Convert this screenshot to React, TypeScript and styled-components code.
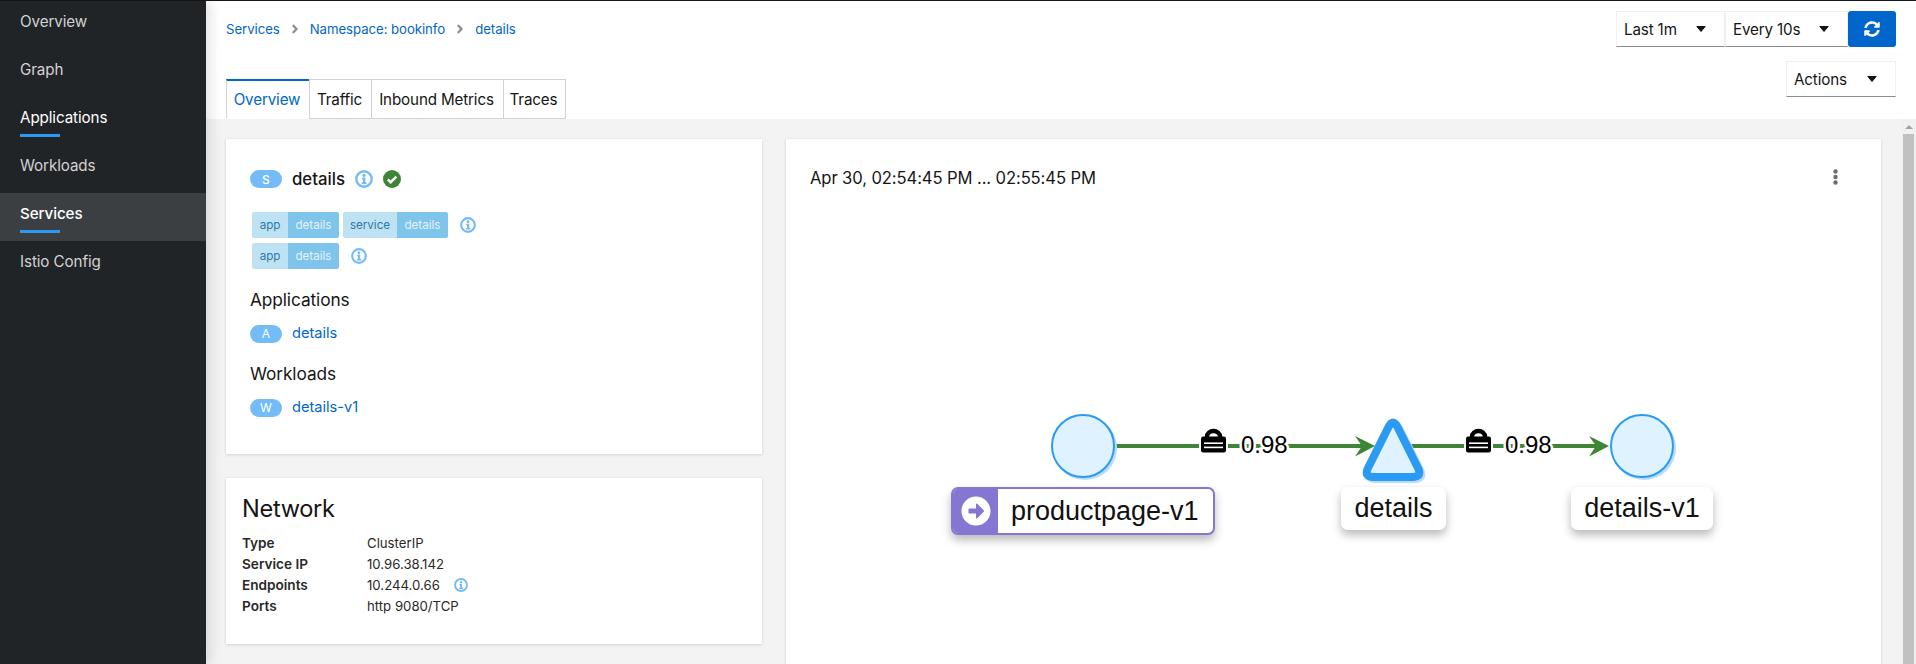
import React from "react";
import styled, { createGlobalStyle } from "styled-components";
import { FaAngleRight, FaArrowAltCircleRight, FaSyncAlt } from "react-icons/fa";

const sans = `Inter, "Open Sans", "Liberation Sans", sans-serif`;

const Global = createGlobalStyle`
  html, body { margin: 0; padding: 0; height: 664px; overflow: hidden; background: #fff; }
  * { box-sizing: border-box; }
  body { font-family: ${sans}; color: #151515; }
`;

const Page = styled.div`
  display: flex;
  height: 664px;
  border-top: 1px solid #151515;
  overflow: hidden;
`;
const Sidebar = styled.nav`
  flex: 0 0 206px;
  background: #212427;
  box-shadow: 4px 0 12px rgba(3, 3, 3, 0.12);
  z-index: 2;
  overflow: hidden;
`;
const NavItem = styled.div<{ $current?: boolean; $mark?: boolean }>`
  height: 48px;
  padding: 0 0 8px 20px;
  display: flex;
  flex-direction: column;
  justify-content: center;
  position: relative;
  font-size: 15.2px;
  letter-spacing: -0.1px;
  color: ${(p) => (p.$current || p.$mark ? "#fff" : "#d2d2d2")};
  font-weight: ${(p) => (p.$current ? 500 : 400)};
  background: ${(p) => (p.$current ? "#3c3f42" : "transparent")};
  &::after {
    content: "";
    display: ${(p) => (p.$mark ? "block" : "none")};
    position: absolute;
    left: 20px;
    bottom: 8px;
    width: 40px;
    height: 3px;
    background: #2b9af3;
  }
`;
const Body = styled.div`
  flex: 1;
  min-width: 0;
  display: flex;
  flex-direction: column;
`;
const Header = styled.header`
  flex: 0 0 118px;
  background: #fff;
  display: flex;
  justify-content: space-between;
  padding: 0 20px;
`;
const HeaderLeft = styled.div`
  display: flex;
  flex-direction: column;
  justify-content: space-between;
  padding-top: 20px;
`;
const Breadcrumb = styled.div`
  display: flex;
  align-items: center;
  height: 16px;
  font-size: 13.2px;
  letter-spacing: -0.05px;
  color: #06c;
`;
const Crumb = styled.span``;
const CrumbSep = styled.span`
  display: flex;
  color: #8a8d90;
  margin: 0 8px;
  font-size: 14px;
`;
const Tabs = styled.div`
  display: flex;
  height: 40px;
`;
const Tab = styled.div<{ $active?: boolean; $w: number }>`
  width: ${(p) => p.$w}px;
  margin-right: -1px;
  padding-right: 2px;
  display: flex;
  align-items: center;
  justify-content: center;
  font-size: 15.2px;
  letter-spacing: -0.15px;
  white-space: nowrap;
  color: ${(p) => (p.$active ? "#06c" : "#151515")};
  border: 1px solid #d2d2d2;
  border-top: ${(p) => (p.$active ? "2px solid #06c" : "1px solid #d2d2d2")};
  border-bottom-color: ${(p) => (p.$active ? "#fff" : "#d2d2d2")};
  background: #fff;
`;
const HeaderRight = styled.div`
  display: flex;
  flex-direction: column;
  align-items: flex-end;
  padding-top: 10px;
  gap: 14px;
`;
const Controls = styled.div`
  display: flex;
`;
const Select = styled.div<{ $w: number }>`
  width: ${(p) => p.$w}px;
  height: 36px;
  display: flex;
  align-items: center;
  justify-content: space-between;
  padding: 0 18px 0 7px;
  font-size: 15.2px;
  letter-spacing: -0.15px;
  border: 1px solid #f0f0f0;
  border-bottom-color: #8a8d90;
  background: #fff;
`;
const Caret = styled.svg`
  width: 10px;
  height: 6px;
  fill: #151515;
`;
const RefreshButton = styled.div`
  width: 48px;
  height: 36px;
  background: #06c;
  color: #fff;
  border-radius: 3px;
  display: flex;
  align-items: center;
  justify-content: center;
  font-size: 16px;
`;
const MainArea = styled.div`
  flex: 1;
  min-height: 0;
  display: flex;
  background: #f3f3f3;
`;
const Content = styled.main`
  flex: 1;
  min-width: 0;
  padding: 20px 20px 0;
  display: grid;
  grid-template-columns: 536px 1fr;
  gap: 24px;
  align-items: start;
  overflow: hidden;
`;
const Column = styled.div`
  display: flex;
  flex-direction: column;
  gap: 24px;
`;
const Card = styled.section<{ $h: number }>`
  background: #fff;
  height: ${(p) => p.$h}px;
  box-shadow: 0 1px 3px rgba(3, 3, 3, 0.12), 0 0 2px rgba(3, 3, 3, 0.06);
`;
const OverviewBody = styled.div`
  padding: 31px 24px 0;
  display: flex;
  flex-direction: column;
`;
const TitleRow = styled.div`
  display: flex;
  align-items: center;
  height: 18px;
  gap: 10px;
  font-size: 16.8px;
  font-weight: 500;
`;
const Pill = styled.span`
  flex: 0 0 32px;
  height: 18px;
  border-radius: 30px;
  background: #73bcf7;
  color: #fff;
  font-size: 12px;
  display: flex;
  align-items: center;
  justify-content: center;
`;
const LabelRow = styled.div<{ $top: number }>`
  display: flex;
  align-items: center;
  margin: ${(p) => p.$top}px 0 0 2px;
  height: 26px;
`;
const LabelKey = styled.span<{ $w: number }>`
  width: ${(p) => p.$w}px;
  height: 26px;
  background: #bee1f4;
  color: #2a7ba8;
  font-size: 11.6px;
  display: flex;
  align-items: center;
  justify-content: center;
  border-radius: 2px 0 0 2px;
`;
const LabelValue = styled.span<{ $w: number }>`
  width: ${(p) => p.$w}px;
  height: 26px;
  background: #7fc4ea;
  color: #e4f3fb;
  font-size: 11.6px;
  display: flex;
  align-items: center;
  justify-content: center;
  border-radius: 0 2px 2px 0;
  margin-right: 4px;
`;
const SectionHeading = styled.h3<{ $top: number }>`
  margin: ${(p) => p.$top}px 0 0;
  font-size: 17.3px;
  line-height: 20px;
  font-weight: 400;
  letter-spacing: -0.1px;
`;
const LinkRow = styled.div`
  margin-top: 15px;
  display: flex;
  align-items: center;
  gap: 10px;
  height: 18px;
  font-size: 14.6px;
  line-height: 16px;
  color: #06c;
`;
const LinkText = styled.span`
  margin-top: -2px;
`;
const InfoSlot = styled.span<{ $left: number }>`
  display: flex;
  margin-left: ${(p) => p.$left}px;
`;
const NetworkBody = styled.div`
  padding: 16px 16px 0;
`;
const NetworkTitle = styled.h2`
  margin: 0 0 8px;
  font-size: 23.6px;
  line-height: 30px;
  font-weight: 400;
  letter-spacing: -0.3px;
`;
const PropGrid = styled.dl`
  margin: 0;
  display: grid;
  grid-template-columns: 125px 1fr;
  grid-auto-rows: 21px;
  align-items: center;
  font-size: 13.2px;
`;
const PropName = styled.dt`
  font-size: 13.6px;
  font-weight: 600;
  color: #292929;
`;
const PropValue = styled.dd`
  margin: 0;
  display: flex;
  align-items: center;
  gap: 14px;
  color: #292929;
`;
const GraphCard = styled(Card)`
  display: flex;
  flex-direction: column;
  overflow: hidden;
`;
const GraphHeader = styled.div`
  flex: 0 0 78px;
  display: flex;
  align-items: center;
  justify-content: space-between;
  padding: 0 43px 0 24px;
`;
const DateText = styled.div`
  font-size: 16.6px;
  font-weight: 400;
  letter-spacing: -0.1px;
`;
const Kebab = styled.svg`
  width: 5px;
  height: 16px;
  margin-top: -2px;
  fill: #6a6e73;
`;
const GraphCanvas = styled.div`
  position: relative;
  flex: 1;
`;
const EdgeSvg = styled.svg`
  position: absolute;
  left: 0;
  top: 0;
`;
const NodeLabel = styled.div<{ $x: number; $y: number; $w: number; $h?: number }>`
  position: absolute;
  left: ${(p) => p.$x - 786}px;
  top: ${(p) => p.$y - 217}px;
  width: ${(p) => p.$w}px;
  height: ${(p) => p.$h ?? 43}px;
  background: #fff;
  border-radius: 7px;
  box-shadow: 0 5px 10px rgba(0, 0, 0, 0.28);
  font-family: "Liberation Sans", Arial, sans-serif;
  font-size: 27px;
  color: #111;
  display: flex;
  align-items: center;
  justify-content: center;
  white-space: nowrap;
`;
const BadgedLabel = styled(NodeLabel)`
  justify-content: flex-start;
  border: 2px solid #8476d1;
  overflow: hidden;
`;
const LabelBadge = styled.span`
  flex: 0 0 45px;
  align-self: stretch;
  background: #8476d1;
  color: #fff;
  font-size: 30px;
  display: flex;
  align-items: center;
  justify-content: center;
  margin-right: 13px;
`;
const Scrollbar = styled.div`
  flex: 0 0 15px;
  background: #f1f1f1;
  display: flex;
  flex-direction: column;
  align-items: center;
`;
const ScrollArrow = styled.div`
  margin-top: 6px;
  width: 0;
  height: 0;
  border-left: 4px solid transparent;
  border-right: 4px solid transparent;
  border-bottom: 4px solid #a3a3a3;
`;
const ScrollThumb = styled.div`
  margin-top: 5px;
  width: 11px;
  flex: 1;
  background: #c1c1c1;
`;

const InfoIcon = ({ size = 18 }: { size?: number }) => (
  <svg width={size} height={size} viewBox="0 0 18 18">
    <circle cx="9" cy="9" r="7.7" fill="#fff" stroke="#73bcf7" strokeWidth="2.4" />
    <circle cx="9" cy="5.3" r="1.6" fill="#73bcf7" />
    <path d="M6.9 7.6h3.5v4.7h1.1v1.7H6.8v-1.7h1.1V9.3h-1z" fill="#73bcf7" />
  </svg>
);
const HealthIcon = () => (
  <svg width="18" height="18" viewBox="0 0 18 18">
    <circle cx="9" cy="9" r="9" fill="#3e8635" />
    <path d="M4.8 9.3l2.9 2.9 5.6-5.6" fill="none" stroke="#fff" strokeWidth="2.4" />
  </svg>
);
const CaretDown = () => (
  <Caret viewBox="0 0 10 6">
    <path d="M0.8 0.5h8.4L5 5.5z" stroke="#151515" strokeWidth="1" strokeLinejoin="round" />
  </Caret>
);
const Lock = ({ x, y }: { x: number; y: number }) => (
  <g transform={`translate(${x} ${y})`}>
    <path d="M-2 25V5h29v20z" fill="#fff" />
    <path d="M6 9V7.5a6.5 5.5 0 0 1 13 0V9" fill="none" stroke="#000" strokeWidth="4.4" />
    <rect x="0" y="7.5" width="25" height="16" rx="2.2" fill="#000" />
    <rect x="3" y="13.4" width="19" height="1.6" fill="#fff" />
    <rect x="3" y="17.6" width="19" height="1.6" fill="#fff" />
  </g>
);
const EdgeLabel = ({ x }: { x: number }) => (
  <text
    x={x}
    y="452.5"
    fontFamily="Liberation Sans, Arial, sans-serif"
    fontSize="24"
    fill="#000"
    stroke="#fff"
    strokeWidth="5"
    paintOrder="stroke"
  >
    0.98
  </text>
);
const Arrow = ({ tip }: { tip: number }) => (
  <path
    d={`M${tip} 446L${tip - 20} 436L${tip - 13} 446L${tip - 20} 456.5z`}
    fill="#3e8635"
  />
);

const triangle =
  "M1388.5 427Q1393 418 1397.5 427L1418 468Q1422.5 477 1412 477L1374 477Q1363.5 477 1368 468Z";

const nav = [
  { t: "Overview" },
  { t: "Graph" },
  { t: "Applications", mark: true },
  { t: "Workloads" },
  { t: "Services", mark: true, current: true },
  { t: "Istio Config" },
];

export default function App() {
  return (
    <Page>
      <Global />
      <Sidebar>
        {nav.map((n) => (
          <NavItem key={n.t} $mark={n.mark} $current={n.current}>
            {n.t}
          </NavItem>
        ))}
      </Sidebar>
      <Body>
        <Header>
          <HeaderLeft>
            <Breadcrumb>
              <Crumb>Services</Crumb>
              <CrumbSep><FaAngleRight /></CrumbSep>
              <Crumb>Namespace: bookinfo</Crumb>
              <CrumbSep><FaAngleRight /></CrumbSep>
              <Crumb>details</Crumb>
            </Breadcrumb>
            <Tabs>
              <Tab $active $w={84}>Overview</Tab>
              <Tab $w={63}>Traffic</Tab>
              <Tab $w={133}>Inbound Metrics</Tab>
              <Tab $w={63}>Traces</Tab>
            </Tabs>
          </HeaderLeft>
          <HeaderRight>
            <Controls>
              <Select $w={109}>Last 1m<CaretDown /></Select>
              <Select $w={123}>Every 10s<CaretDown /></Select>
              <RefreshButton><FaSyncAlt /></RefreshButton>
            </Controls>
            <Select $w={110}>Actions<CaretDown /></Select>
          </HeaderRight>
        </Header>
        <MainArea>
          <Content>
            <Column>
              <Card $h={315}>
                <OverviewBody>
                  <TitleRow>
                    <Pill>S</Pill>
                    details
                    <InfoIcon />
                    <HealthIcon />
                  </TitleRow>
                  <LabelRow $top={24}>
                    <LabelKey $w={36}>app</LabelKey>
                    <LabelValue $w={51}>details</LabelValue>
                    <LabelKey $w={54}>service</LabelKey>
                    <LabelValue $w={51}>details</LabelValue>
                    <InfoSlot $left={8}><InfoIcon size={16} /></InfoSlot>
                  </LabelRow>
                  <LabelRow $top={5}>
                    <LabelKey $w={36}>app</LabelKey>
                    <LabelValue $w={51}>details</LabelValue>
                    <InfoSlot $left={8}><InfoIcon size={16} /></InfoSlot>
                  </LabelRow>
                  <SectionHeading $top={21}>Applications</SectionHeading>
                  <LinkRow><Pill>A</Pill><LinkText>details</LinkText></LinkRow>
                  <SectionHeading $top={21}>Workloads</SectionHeading>
                  <LinkRow><Pill>W</Pill><LinkText>details-v1</LinkText></LinkRow>
                </OverviewBody>
              </Card>
              <Card $h={166}>
                <NetworkBody>
                  <NetworkTitle>Network</NetworkTitle>
                  <PropGrid>
                    <PropName>Type</PropName>
                    <PropValue>ClusterIP</PropValue>
                    <PropName>Service IP</PropName>
                    <PropValue>10.96.38.142</PropValue>
                    <PropName>Endpoints</PropName>
                    <PropValue>10.244.0.66<InfoIcon size={14} /></PropValue>
                    <PropName>Ports</PropName>
                    <PropValue>http 9080/TCP</PropValue>
                  </PropGrid>
                </NetworkBody>
              </Card>
            </Column>
            <GraphCard $h={800}>
              <GraphHeader>
                <DateText>Apr 30, 02:54:45 PM ... 02:55:45 PM</DateText>
                <Kebab viewBox="0 0 5 16">
                  <circle cx="2.5" cy="2.5" r="2.2" />
                  <circle cx="2.5" cy="8" r="2.2" />
                  <circle cx="2.5" cy="13.5" r="2.2" />
                </Kebab>
              </GraphHeader>
              <GraphCanvas>
                <EdgeSvg width="1095" height="500" viewBox="786 217 1095 500">
                  <path d="M1116 446H1365M1400 446H1600" stroke="#3e8635" strokeWidth="4" fill="none" />
                  <Lock x={1201} y={429} />
                  <EdgeLabel x={1241} />
                  <Lock x={1466} y={429} />
                  <EdgeLabel x={1505} />
                  <circle cx="1085" cy="448" r="32" fill="#b9dcf7" />
                  <circle cx="1083" cy="446" r="31" fill="#def3ff" stroke="#2b9af3" strokeWidth="2" />
                  <circle cx="1644" cy="448" r="32" fill="#b9dcf7" />
                  <circle cx="1642" cy="446" r="31" fill="#def3ff" stroke="#2b9af3" strokeWidth="2" />
                  <path d={triangle} transform="translate(2 2)" fill="#b9dcf7" stroke="#b9dcf7" strokeWidth="8" />
                  <path d={triangle} fill="#def3ff" stroke="#2b9af3" strokeWidth="8" />
                  <Arrow tip={1375} />
                  <Arrow tip={1609} />
                </EdgeSvg>
                <BadgedLabel $x={951} $y={487} $w={264} $h={48}>
                  <LabelBadge><FaArrowAltCircleRight /></LabelBadge>
                  productpage-v1
                </BadgedLabel>
                <NodeLabel $x={1341} $y={487} $w={105}>details</NodeLabel>
                <NodeLabel $x={1571} $y={487} $w={142}>details-v1</NodeLabel>
              </GraphCanvas>
            </GraphCard>
          </Content>
          <Scrollbar>
            <ScrollArrow />
            <ScrollThumb />
          </Scrollbar>
        </MainArea>
      </Body>
    </Page>
  );
}
